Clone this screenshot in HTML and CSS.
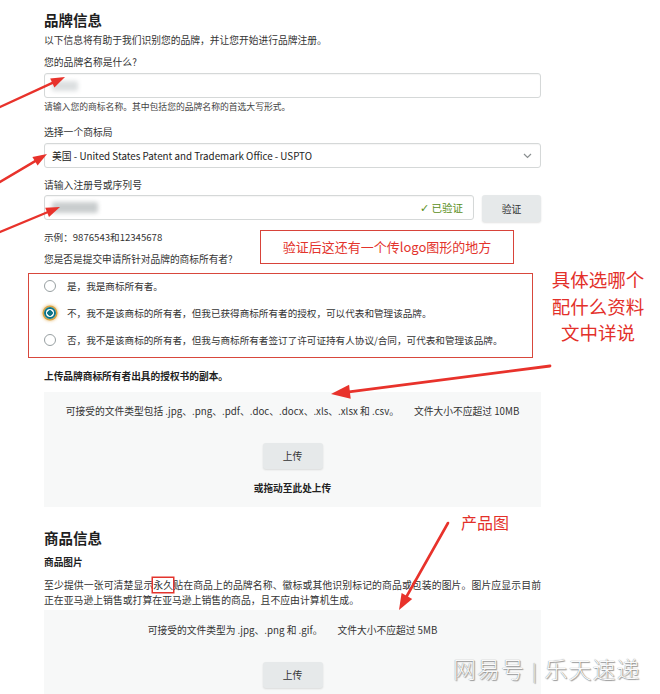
FILE: index.html
```html
<!DOCTYPE html>
<html lang="zh-CN">
<head>
    <meta charset="UTF-8">
    <meta name="viewport" content="width=device-width, initial-scale=1.0">
    <title>品牌注册</title>
    <link rel="stylesheet" href="styles.css">
</head>
<body>
    <div class="page">
        <h2 class="section-title">品牌信息</h2>
        <p class="desc">以下信息将有助于我们识别您的品牌，并让您开始进行品牌注册。</p>

        <label class="field-label">您的品牌名称是什么?</label>
        <div class="input"><span class="blur blur-name"></span></div>
        <p class="hint">请输入您的商标名称。其中包括您的品牌名称的首选大写形式。</p>

        <label class="field-label label-gap">选择一个商标局</label>
        <div class="input select">
            <span class="select-text">美国 - United States Patent and Trademark Office - USPTO</span>
            <svg class="chevron" width="9" height="6" viewBox="0 0 9 6"><path d="M1 1 L4.5 4.5 L8 1" fill="none" stroke="#8a8f90" stroke-width="1.2"/></svg>
        </div>

        <label class="field-label label-gap3">请输入注册号或序列号</label>
        <div class="verify-row">
            <div class="input verify-input">
                <span class="blur blur-number"></span>
                <span class="verified"><span class="check">✓</span> 已验证</span>
            </div>
            <button class="btn verify-btn">验证</button>
        </div>
        <p class="example">示例：9876543和12345678</p>

        <p class="question">您是否是提交申请所针对品牌的商标所有者?</p>
        <div class="radio-list">
            <div class="radio-row"><span class="radio"></span>是，我是商标所有者。</div>
            <div class="radio-row"><span class="radio checked"></span>不，我不是该商标的所有者，但我已获得商标所有者的授权，可以代表和管理该品牌。</div>
            <div class="radio-row"><span class="radio"></span>否，我不是该商标的所有者，但我与商标所有者签订了许可证持有人协议/合同，可代表和管理该品牌。</div>
        </div>

        <p class="upload-title">上传品牌商标所有者出具的授权书的副本。</p>
        <div class="upload-box">
            <p class="upload-types">可接受的文件类型包括 .jpg、.png、.pdf、.doc、.docx、.xls、.xlsx 和 .csv。<span class="size">文件大小不应超过 10MB</span></p>
            <button class="btn upload-btn">上传</button>
            <p class="drag">或拖动至此处上传</p>
        </div>

        <h2 class="section-title product-title">商品信息</h2>
        <p class="sub-title">商品图片</p>
        <p class="product-desc">至少提供一张可清楚显示<span class="mark">永久</span>贴在商品上的品牌名称、徽标或其他识别标记的商品或包装的图片。图片应显示目前正在亚马逊上销售或打算在亚马逊上销售的商品，且不应由计算机生成。</p>
        <div class="upload-box upload-box-last">
            <p class="upload-types">可接受的文件类型为 .jpg、.png 和 .gif。<span class="size">文件大小不应超过 5MB</span></p>
            <button class="btn upload-btn">上传</button>
        </div>
    </div>

    <!-- 标注 -->
    <div class="note-logo">验证后这还有一个传logo图形的地方</div>
    <div class="note-radio-box"></div>
    <div class="note-text note-choose">具体选哪个<br>配什么资料<br>文中详说</div>
    <div class="note-text note-product">产品图</div>

    <svg class="arrows" width="660" height="694" viewBox="0 0 660 694">
        <g stroke="#e8322b" stroke-width="2.4" stroke-linecap="round">
            <line x1="0" y1="107" x2="53" y2="82.6"/>
            <line x1="0" y1="182" x2="36" y2="160.6"/>
            <line x1="0" y1="232" x2="48" y2="212"/>
            <line x1="550" y1="366" x2="349" y2="391.8" stroke-width="2.8"/>
            <line x1="448" y1="523" x2="406" y2="597.5" stroke-width="2.6"/>
        </g>
        <g fill="#e8322b">
            <polygon points="65,77 54.4,87.4 50.2,78.4"/>
            <polygon points="47,154 37.6,165.5 32.4,156.9"/>
            <polygon points="60,207 49,217 45.2,207.8"/>
            <polygon points="331,394 350.7,398.7 349.1,384.7"/>
            <polygon points="399,610 412.2,599 401.6,593"/>
        </g>
    </svg>

    <div class="watermark">网易号<span class="wm-sep">|</span>乐天速递</div>
</body>
</html>
```

FILE: styles.css
```css
body {
    margin: 0;
    font-family: "Noto Sans CJK SC", sans-serif;
    color: #333;
    background-color: #fff;
    position: relative;
    overflow: hidden;
    height: 694px;
}
p {
    margin: 0;
}
.page {
    padding: 11px 0 0 44px;
    width: 497px;
}
.section-title {
    margin: 0;
    font-size: 14.5px;
    line-height: 18px;
    font-weight: 700;
    color: #1f1f1f;
}
.desc {
    margin-top: 4px;
    font-size: 9.75px;
    line-height: 14px;
}
.field-label {
    display: block;
    margin-top: 8px;
    font-size: 9.8px;
    line-height: 14px;
}
.label-gap {
    margin-top: 11px;
}
.label-gap3 {
    margin-top: 10px;
}
.input {
    position: relative;
    box-sizing: border-box;
    height: 25px;
    margin-top: 4px;
    padding: 0 7px;
    display: flex;
    align-items: center;
    border: 1px solid #d5d8d8;
    border-radius: 3px;
    background-color: #fff;
    box-shadow: inset 0 1px 1px rgba(0, 0, 0, 0.04);
}
.blur {
    display: block;
    filter: blur(2px);
    border-radius: 2px;
}
.blur-name {
    width: 26px;
    height: 10px;
    background-color: #dcdfe0;
}
.blur-number {
    width: 46px;
    height: 11px;
    background-color: #c9cdce;
}
.hint {
    margin-top: 2px;
    font-size: 8.8px;
    line-height: 14px;
    color: #444;
}
.select {
    justify-content: space-between;
}
.select-text {
    font-size: 9.8px;
    color: #222;
}
.chevron {
    margin-right: 1px;
}
.verify-row {
    display: flex;
    align-items: flex-start;
    gap: 8px;
    margin-top: 3px;
}
.verify-input {
    width: 430px;
    margin-top: 0;
    justify-content: space-between;
}
.verified {
    font-size: 10.5px;
    color: #5b8f22;
    margin-right: 3px;
}
.check {
    font-family: "DejaVu Sans", sans-serif;
    font-size: 11px;
}
.btn {
    font-family: "Noto Sans CJK SC", sans-serif;
    font-size: 9.8px;
    color: #333;
    background-color: #e6e9ea;
    border: none;
    border-radius: 3px;
    box-shadow: 0 1px 2px rgba(0, 0, 0, 0.12);
    padding: 0;
    cursor: pointer;
}
.verify-btn {
    width: 59px;
    height: 27px;
}
.example {
    margin-top: 8px;
    font-size: 9.6px;
    line-height: 14px;
}
.question {
    margin-top: 8px;
    font-size: 9.7px;
    line-height: 14px;
}
.radio-list {
    margin-top: 6px;
}
.radio-row {
    height: 27px;
    display: flex;
    align-items: center;
    font-size: 9.6px;
    color: #333;
}
.radio {
    box-sizing: border-box;
    width: 12px;
    height: 12px;
    margin: 0 11px 0 0;
    border: 1px solid #98a0a2;
    border-radius: 50%;
    background-color: #fff;
    flex-shrink: 0;
}
.radio.checked {
    border: 2px solid #0d7487;
    background: radial-gradient(circle, #0d7487 0 2.5px, #fff 3px);
    box-shadow: 0 0 0 1.5px #d9a544, 0 0 3px 2px rgba(222, 160, 60, 0.6);
}
.upload-title {
    margin-top: 16px;
    font-size: 9.7px;
    line-height: 14px;
    font-weight: 700;
    color: #1f1f1f;
}
.upload-box {
    margin-top: 9px;
    padding: 12px 0;
    background-color: #f7f8f8;
    text-align: center;
}
.upload-types {
    font-size: 9.75px;
    line-height: 14px;
}
.size {
    margin-left: 15px;
}
.upload-btn {
    display: block;
    width: 60px;
    height: 26px;
    margin: 25px auto 0;
}
.drag {
    margin-top: 12px;
    font-size: 9.7px;
    line-height: 14px;
    font-weight: 700;
    color: #1f1f1f;
}
.product-title {
    margin-top: 22px;
}
.sub-title {
    margin-top: 8px;
    font-size: 9.7px;
    line-height: 14px;
    font-weight: 700;
    color: #1f1f1f;
}
.product-desc {
    margin-top: 9px;
    font-size: 9.85px;
    line-height: 14.5px;
    text-align: justify;
}
.mark {
    box-shadow: 0 0 0 1.5px #e3342d;
}
.upload-box-last {
    margin-top: 3px;
    padding: 13px 0 40px;
}
.note-logo {
    position: absolute;
    left: 260px;
    top: 230px;
    box-sizing: border-box;
    width: 254px;
    height: 34px;
    border: 1.5px solid #d8433a;
    color: #e3342d;
    font-size: 13px;
    line-height: 31px;
    text-align: center;
}
.note-radio-box {
    position: absolute;
    left: 28px;
    top: 273px;
    box-sizing: border-box;
    width: 505px;
    height: 85px;
    border: 1.5px solid #d8473c;
}
.note-text {
    position: absolute;
    color: #e3302a;
    text-align: center;
}
.note-choose {
    left: 548px;
    top: 266px;
    width: 100px;
    font-size: 18.5px;
    line-height: 26.5px;
}
.note-product {
    left: 461px;
    top: 512px;
    font-size: 16px;
    line-height: 20px;
}
.arrows {
    position: absolute;
    left: 0;
    top: 0;
    pointer-events: none;
}
.watermark {
    position: absolute;
    left: 453px;
    top: 653px;
    font-size: 23px;
    line-height: 30px;
    font-weight: 300;
    color: #fafafa;
    text-shadow: 0 0 1px #6f6f6f, 1px 1px 1px #9a9a9a;
    letter-spacing: 1px;
}
.wm-sep {
    margin: 0 7px;
    font-size: 18px;
    color: #eee;
}
```
